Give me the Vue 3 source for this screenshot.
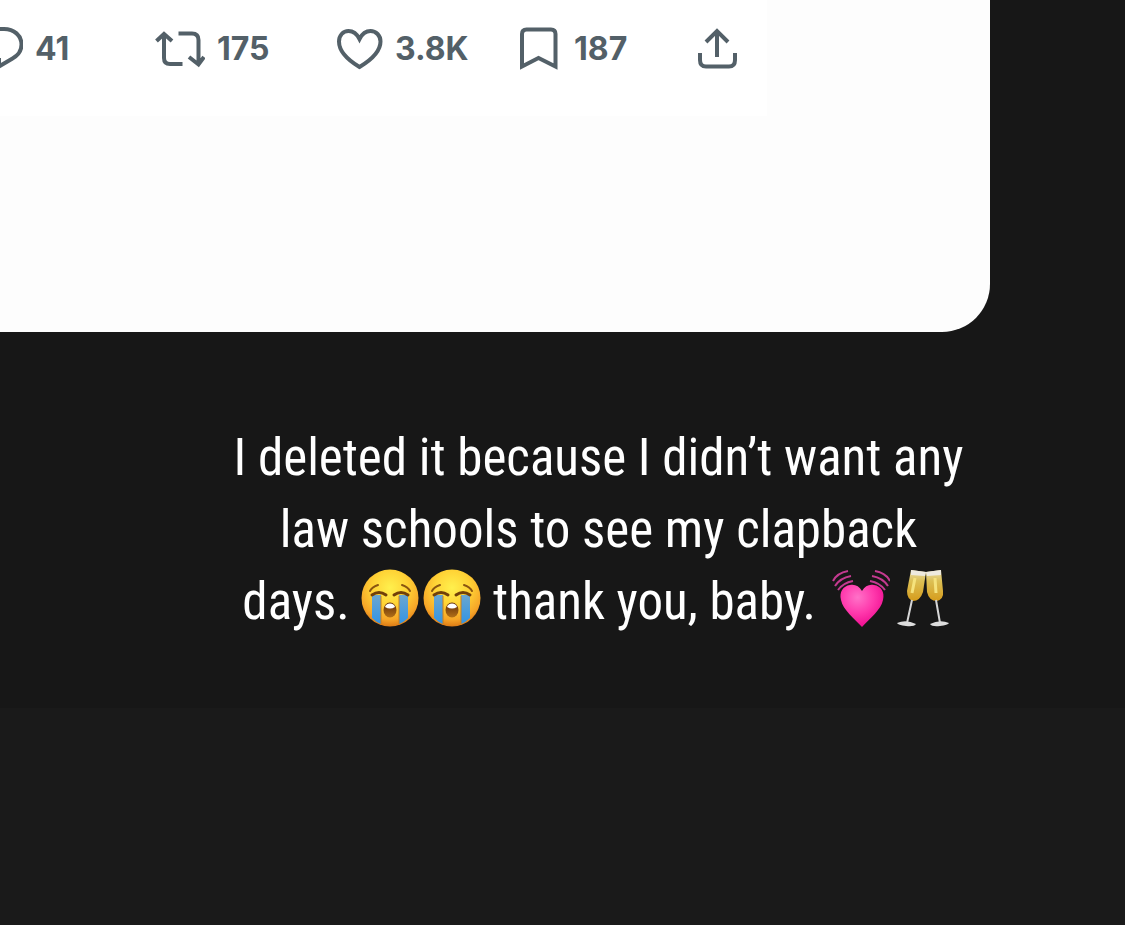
<script setup>
const actions = [
  { id: 'reply', label: 'Reply', count: '41', width: 50 },
  { id: 'repost', label: 'Repost', count: '175', width: 50 },
  { id: 'like', label: 'Like', count: '3.8K', width: 46 },
  { id: 'bookmark', label: 'Bookmark', count: '187', width: 43 },
  { id: 'share', label: 'Share', count: '', width: 43 },
]
</script>

<template>
  <main class="story">
    <section class="backdrop">
      <article class="card">
        <div class="post">
          <div class="actions">
            <button v-for="a in actions" :key="a.id" type="button" class="action" :aria-label="`${a.label} ${a.count}`">
              <svg class="icon" :width="a.width" height="46" :viewBox="`0 0 ${a.width} 46`" aria-hidden="true">
                <path v-if="a.id === 'reply'" d="M24 3H31C41 3 48.5 9.5 48.5 18.5C48.5 25 45 29.5 39.5 32.5L26 40.5V34H24C13 34 4 27 4 18.5C4 9 13 3 24 3Z" />
                <g v-else-if="a.id === 'repost'">
                  <path d="M1.500 15L9 8L17 15M9 8V32Q9 38 15 38H27.500" />
                  <path d="M23.500 7.500H37Q43.500 7.500 43.500 14V38M34 31L43.500 38.500L49 31" />
                </g>
                <path v-else-if="a.id === 'like'" d="M22.500 13C19.500 7 15.500 5 11.500 5C6 5 2 9.500 2 15.500C2 25 10 33.500 22.500 41C35 33.500 43.500 25 43.500 15.500C43.500 9.500 39 5 33.500 5C29.500 5 25.500 7 22.500 13Z" />
                <path v-else-if="a.id === 'bookmark'" d="M3 40.500V8Q3 3.500 7.500 3.500H32Q36.500 3.500 36.500 8V40.500L19.500 32Z" />
                <g v-else>
                  <path d="M20 31V5M9 16L20 5L31 16" />
                  <path d="M3 27V34Q3 40.500 9 40.500H32Q38 40.500 38 34V27" />
                </g>
              </svg>
              <span v-if="a.count">{{ a.count }}</span>
            </button>
          </div>
        </div>
      </article>

      <p class="caption">
        <span class="line">I deleted it because I didn’t want any</span>
        <span class="line">law schools to see my clapback</span>
        <span class="line">days.
          <svg v-for="n in 2" :key="n" class="emoji" viewBox="0 0 58 58" role="img" aria-label="Loudly crying face">
            <defs>
              <radialGradient :id="`face${n}`" cx="50%" cy="32%" r="70%">
                <stop offset="0" stop-color="#fff04d" />
                <stop offset=".45" stop-color="#ffd235" />
                <stop offset=".8" stop-color="#f6a528" />
                <stop offset="1" stop-color="#d97412" />
              </radialGradient>
              <linearGradient :id="`tear${n}`" x1="0" y1="0" x2="0" y2="1">
                <stop offset="0" stop-color="#6aa6cf" />
                <stop offset="1" stop-color="#3294e4" />
              </linearGradient>
              <linearGradient :id="`mouth${n}`" x1="0" y1="0" x2="0" y2="1">
                <stop offset="0" stop-color="#5e2a08" />
                <stop offset="1" stop-color="#b37018" />
              </linearGradient>
            </defs>
            <circle cx="29" cy="29" r="28.500" :fill="`url(#face${n})`" />
            <path d="M11 26H20V55Q15 53 11 49ZM38 26H47V49Q43 53 38 55Z" :fill="`url(#tear${n})`" />
            <path d="M20 27V55M38 27V55" stroke="#c88020" stroke-width="1" />
            <path d="M9 22Q11 18 17 16M41 16Q47 18 49 22" fill="none" stroke="#8a5510" stroke-width="2" stroke-linecap="round" />
            <path d="M11 26Q18 21 25 26M33 26Q40 21 47 26" fill="none" stroke="#714009" stroke-width="3" stroke-linecap="round" />
            <ellipse cx="29" cy="41" rx="6.500" ry="7.500" :fill="`url(#mouth${n})`" />
            <path d="M24 38Q25 34.500 29 34.500Q33 34.500 34 38Q29 41 24 38Z" fill="#fff" />
          </svg>
          thank you, baby.
          <svg class="emoji heart" viewBox="0 0 58 58" role="img" aria-label="Beating heart">
            <defs>
              <radialGradient id="pink" cx="40%" cy="30%" r="75%">
                <stop offset="0" stop-color="#ff72c8" />
                <stop offset=".5" stop-color="#ff39ac" />
                <stop offset="1" stop-color="#ed078c" />
              </radialGradient>
            </defs>
            <path d="M30 22C27 17 23 15 18 16C11 17 7 23 9 31C11 41 22 49 30 58C38 49 49 41 51 31C53 23 49 17 42 16C37 15 33 17 30 22Z" fill="url(#pink)" />
            <path d="M1 12Q5 4 16 2M3 17Q8 9 19 7M6 21Q11 14 21 12M58 12Q54 4 43 2M56 17Q51 9 40 7M53 21Q48 14 38 12" fill="none" stroke="#c43a90" stroke-width="2" />
          </svg>
          <svg class="emoji" viewBox="0 0 58 58" role="img" aria-label="Clinking glasses">
            <defs>
              <linearGradient id="wine" x1="0" y1="0" x2="0" y2="1">
                <stop offset="0" stop-color="#e8dcae" />
                <stop offset=".35" stop-color="#dcc055" />
                <stop offset="1" stop-color="#d69c1c" />
              </linearGradient>
            </defs>
            <path d="M14 1L29 3L26 23Q23 32 16 32Q10 30 10 22Z" fill="url(#wine)" />
            <path d="M29 3L44 1L46 22Q47 30 40 32Q32 32 30 23Z" fill="url(#wine)" />
            <path d="M14 1L29 3L28 7L14 6ZM29 3L44 1V6L30 7Z" fill="#eeeade" />
            <path d="M18 9L15 24M38 9L39 24" stroke="#f5e27c" stroke-width="3" />
            <path d="M15 31L10 54M39 31L43 54" stroke="#d6d6d6" stroke-width="2" />
            <path d="M0 54Q9 50 19 55Q17 58 9 57Q1 56 0 54ZM52 54Q43 50 33 55Q35 58 43 57Q51 56 52 54Z" fill="#ddd" />
          </svg>
        </span>
      </p>
    </section>
  </main>
</template>

<style>
body {
  margin: 0;
  background: #1a1a1a;
}
</style>

<style scoped>
.story {
  min-height: 100vh;
  overflow: hidden;
  background: #1a1a1a;
}
.backdrop {
  padding-bottom: 70px;
  background: #171717;
}
.card {
  box-sizing: border-box;
  min-height: 332px;
  margin-right: 135px;
  overflow: hidden;
  border-bottom-right-radius: 48px;
  background: #fdfdfd;
}
.post {
  box-sizing: border-box;
  margin-right: 223px;
  padding: 26px 0 44px;
  background: #fff;
}
.actions {
  display: grid;
  grid-template-columns: 182px 182px 182px 178px auto;
  margin-left: -27px;
}
.action {
  display: flex;
  align-items: center;
  gap: 12px;
  padding: 0;
  border: 0;
  background: none;
  color: #536068;
  font: 700 32px/46px Inter, "Liberation Sans", sans-serif;
  white-space: nowrap;
}
.icon {
  flex: none;
  fill: none;
  stroke: currentColor;
  stroke-width: 4;
}
.caption {
  margin: 0;
  padding: 90px 0 0 72px;
  color: #fff;
  font: 400 51px/72px "Roboto Condensed", "Liberation Sans Narrow", Roboto, sans-serif;
  text-align: center;
}
.line {
  display: block;
  white-space: nowrap;
}
.emoji {
  width: 58px;
  height: 58px;
  margin-right: 4px;
  vertical-align: -8px;
}
.emoji + .emoji {
  margin-right: 0;
}
.emoji.heart {
  margin: 0 7px 0 4px;
}
</style>
